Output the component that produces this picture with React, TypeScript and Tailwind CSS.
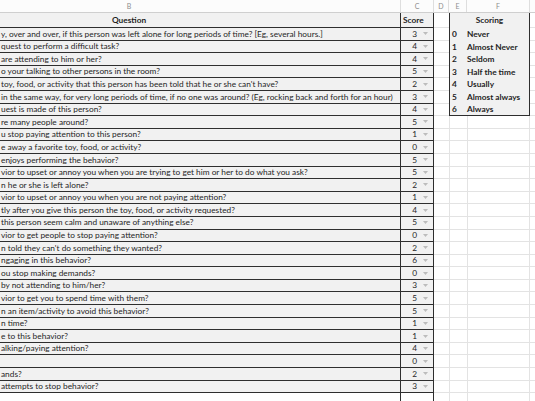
import React from 'react'

const rows: [string, number][] = [
  ['y, over and over, if this person was left alone for long periods of time? [Eg, several hours.]', 3],
  ['quest to perform a difficult task?', 4],
  ['are attending to him or her?', 4],
  ['o your talking to other persons in the room?', 5],
  ["toy, food, or activity that this person has been told that he or she can't have?", 2],
  ['in the same way, for very long periods of time, if no one was around? (Eg, rocking back and forth for an hour)', 3],
  ['uest is made of this person?', 4],
  ['re many people around?', 5],
  ['u stop paying attention to this person?', 1],
  ['e away a favorite toy, food, or activity?', 0],
  ['enjoys performing the behavior?', 5],
  ['vior to upset or annoy you when you are trying to get him or her to do what you ask?', 5],
  ['n he or she is left alone?', 2],
  ['vior to upset or annoy you when you are not paying attention?', 1],
  ['tly after you give this person the toy, food, or activity requested?', 4],
  ['this person seem calm and unaware of anything else?', 5],
  ['vior to get people to stop paying attention?', 0],
  ["n told they can't do something they wanted?", 2],
  ['ngaging in this behavior?', 6],
  ['ou stop making demands?', 0],
  ['by not attending to him/her?', 3],
  ['vior to get you to spend time with them?', 5],
  ['n an item/activity to avoid this behavior?', 5],
  ['n time?', 1],
  ['e to this behavior?', 1],
  ['alking/paying attention?', 4],
  ['', 0],
  ['ands?', 2],
  ['attempts to stop behavior?', 3],
]

const scoring: [number, string][] = [
  [0, 'Never'],
  [1, 'Almost Never'],
  [2, 'Seldom'],
  [3, 'Half the time'],
  [4, 'Usually'],
  [5, 'Almost always'],
  [6, 'Always'],
]

function DropArrow() {
  return (
    <svg width="5" height="3" viewBox="0 0 5 3" className="shrink-0">
      <path d="M0 0h5L2.5 3z" fill="#bcbcbc" />
    </svg>
  )
}

export default function App() {
  return (
    <div className="h-[401px] w-[535px] overflow-hidden bg-white font-['Lato',sans-serif] text-[#1f1f1f]">
      {/* sheet is scrolled: column B starts off-screen */}
      <div className="-ml-[142px] w-[720px]">
        {/* column letters */}
        <div className="flex h-[13px] border-b border-[#cfcfcf] bg-[#fcfcfc] text-[7px] text-[#8e8e8e]">
          <div className="flex w-[543px] shrink-0 items-center justify-center border-r border-[#dedede]">B</div>
          <div className="flex w-[33px] shrink-0 items-center justify-center border-r border-[#dedede]">C</div>
          <div className="flex w-[15px] shrink-0 items-center justify-center border-r border-[#dedede]">D</div>
          <div className="flex w-[18px] shrink-0 items-center justify-center border-r border-[#dedede]">E</div>
          <div className="flex w-[63px] shrink-0 items-center justify-center border-r border-[#dedede]">F</div>
          <div className="flex-1" />
        </div>

        {/* header row */}
        <div className="flex h-[15px] text-[8.3px] font-bold">
          <div className="flex w-[543px] shrink-0 items-center justify-center border-r border-b border-[#2e2e2e] bg-[#f1f1f1]">
            Question
          </div>
          <div className="flex w-[33px] shrink-0 items-center border-r border-b border-[#2e2e2e] bg-[#f1f1f1] pl-[2px]">
            Score
          </div>
          <div className="w-[15px] shrink-0 border-b border-[#e3e3e3]" />
          <div className="flex w-[81px] shrink-0 items-center justify-center border-x border-[#2e2e2e] bg-[#f1f1f1]">
            Scoring
          </div>
          <div className="flex-1 border-b border-[#e3e3e3]" />
        </div>

        {/* data rows */}
        {rows.map(([q, s], i) => {
          const sc = scoring[i]
          const last = i === scoring.length - 1
          return (
            <div key={i} className="flex h-[12.6px] text-[8.3px]">
              <div className="flex w-[543px] shrink-0 items-center overflow-hidden whitespace-nowrap border-r border-b border-[#2e2e2e] bg-[#f1f1f1] pl-[143px]">
                {q}
              </div>
              <div className="flex w-[33px] shrink-0 items-center justify-end gap-[6px] border-r border-b border-[#2e2e2e] bg-[#f1f1f1] pr-[5px]">
                <span>{s}</span>
                <DropArrow />
              </div>
              <div className="w-[15px] shrink-0 border-b border-[#e3e3e3]" />
              {sc ? (
                <div
                  className={
                    'flex w-[81px] shrink-0 items-center border-x border-[#2e2e2e] bg-[#f1f1f1] font-bold ' +
                    (last ? 'border-b' : '')
                  }
                >
                  <span className="w-[17px] shrink-0 pl-[2px]">{sc[0]}</span>
                  <span>{sc[1]}</span>
                </div>
              ) : (
                <>
                  <div className="w-[18px] shrink-0 border-b border-l border-[#e3e3e3]" />
                  <div className="w-[63px] shrink-0 border-b border-x border-[#e3e3e3]" />
                </>
              )}
              <div className="flex-1 border-b border-[#e3e3e3]" />
            </div>
          )
        })}

        {/* trailing empty row */}
        <div className="flex h-[12.6px]">
          <div className="w-[543px] shrink-0 border-r border-[#2e2e2e]" />
          <div className="w-[33px] shrink-0 border-r border-[#2e2e2e]" />
          <div className="w-[15px] shrink-0" />
          <div className="w-[18px] shrink-0 border-l border-[#e3e3e3]" />
          <div className="w-[63px] shrink-0 border-x border-[#e3e3e3]" />
          <div className="flex-1" />
        </div>
      </div>
    </div>
  )
}
